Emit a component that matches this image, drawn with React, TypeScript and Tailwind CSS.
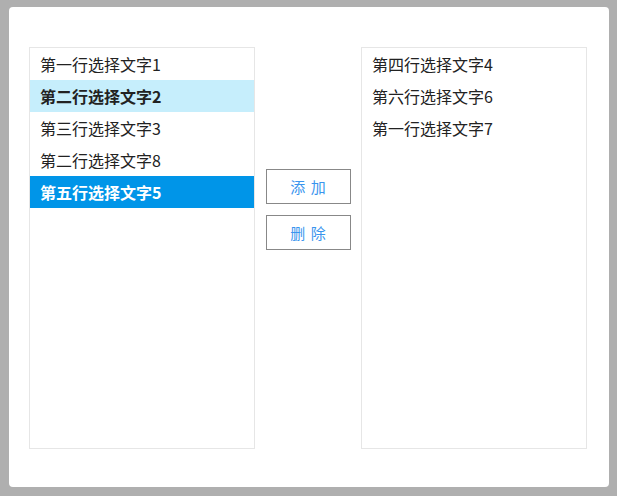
import { useState } from 'react';

interface Item {
  id: number;
  label: string;
}

const leftInit: Item[] = [
  { id: 1, label: '第一行选择文字1' },
  { id: 2, label: '第二行选择文字2' },
  { id: 3, label: '第三行选择文字3' },
  { id: 8, label: '第二行选择文字8' },
  { id: 5, label: '第五行选择文字5' },
];

const rightInit: Item[] = [
  { id: 4, label: '第四行选择文字4' },
  { id: 6, label: '第六行选择文字6' },
  { id: 7, label: '第一行选择文字7' },
];

function ListBox({
  items,
  hovered,
  selected,
  onSelect,
}: {
  items: Item[];
  hovered?: number;
  selected?: number;
  onSelect: (id: number) => void;
}) {
  return (
    <div className="w-[226px] h-[402px] border border-[#e6e6e6] overflow-y-auto">
      {items.map((item) => {
        const isSel = item.id === selected;
        const isHover = item.id === hovered;
        return (
          <div
            key={item.id}
            onClick={() => onSelect(item.id)}
            className={
              isSel
                ? 'h-8 px-[10px] flex items-center text-[16px] leading-none font-semibold bg-[#0095e8] text-white cursor-pointer'
                : isHover
                ? 'h-8 px-[10px] flex items-center text-[16px] leading-none font-semibold bg-[#c6eefc] text-[#222] cursor-pointer'
                : 'h-8 px-[10px] flex items-center text-[16px] leading-none text-[#222] cursor-pointer'
            }
          >
            {item.label}
          </div>
        );
      })}
    </div>
  );
}

export default function App() {
  const [left, setLeft] = useState<Item[]>(leftInit);
  const [right, setRight] = useState<Item[]>(rightInit);
  const [leftSel, setLeftSel] = useState<number | undefined>(5);
  const [rightSel, setRightSel] = useState<number | undefined>(undefined);

  const add = () => {
    const item = left.find((i) => i.id === leftSel);
    if (!item) return;
    setLeft(left.filter((i) => i.id !== leftSel));
    setRight([...right, item]);
    setLeftSel(undefined);
  };

  const remove = () => {
    const item = right.find((i) => i.id === rightSel);
    if (!item) return;
    setRight(right.filter((i) => i.id !== rightSel));
    setLeft([...left, item]);
    setRightSel(undefined);
  };

  return (
    <div
      className="w-[617px] h-[496px] bg-[#afafaf] pt-[7px] pl-[9px] pr-[8px] pb-[9px]"
      style={{ fontFamily: '"Noto Sans CJK SC", "Liberation Sans", sans-serif' }}
    >
      <div className="h-full bg-white rounded-[4px] pl-[20px] pt-[40px] flex">
        <ListBox items={left} hovered={2} selected={leftSel} onSelect={setLeftSel} />

        <div className="w-[106px] flex flex-col pl-[11px] pt-[122px] gap-[11px]">
          <button
            onClick={add}
            className="w-[85px] h-[35px] border border-[#888] bg-white text-[#3a95ee] text-[15px] leading-none tracking-[1px] flex items-center justify-center"
          >
            添 加
          </button>
          <button
            onClick={remove}
            className="w-[85px] h-[35px] border border-[#888] bg-white text-[#3a95ee] text-[15px] leading-none tracking-[1px] flex items-center justify-center"
          >
            删 除
          </button>
        </div>

        <ListBox items={right} selected={rightSel} onSelect={setRightSel} />
      </div>
    </div>
  );
}
